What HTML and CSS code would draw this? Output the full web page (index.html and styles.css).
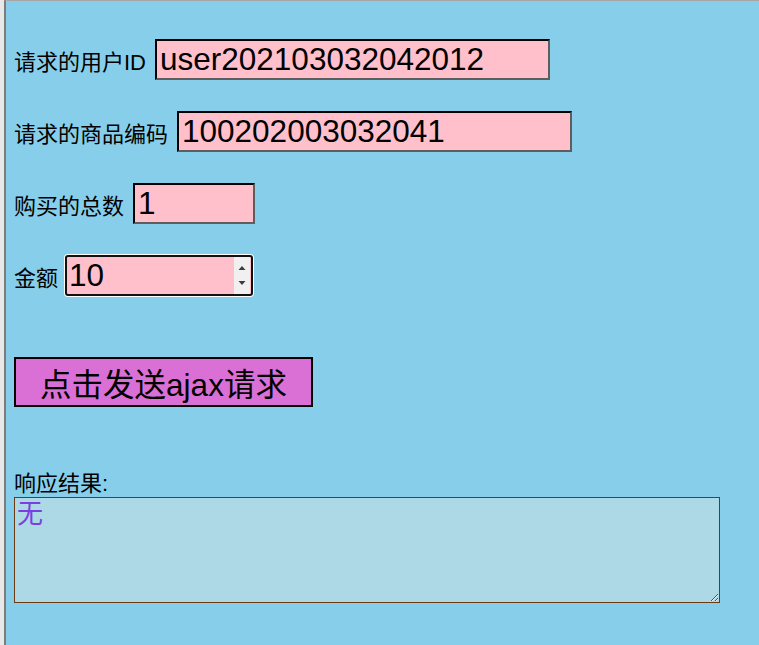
FILE: index.html
```html
<!DOCTYPE html>
<html lang="zh">
<head>
<meta charset="utf-8">
<title>ajax请求</title>
<link rel="stylesheet" href="styles.css">
</head>
<body>
<div class="frame">
  <main class="page">
    <div class="rows">
      <div class="row">
        <label class="lbl" for="uid">请求的用户ID</label>
        <input id="uid" class="field wide" type="text" value="user202103032042012">
      </div>
      <div class="row">
        <label class="lbl" for="gid">请求的商品编码</label>
        <input id="gid" class="field wide" type="text" value="100202003032041">
      </div>
      <div class="row">
        <label class="lbl" for="cnt">购买的总数</label>
        <input id="cnt" class="field short" type="text" value="1">
      </div>
      <div class="row row-tight">
        <label class="lbl" for="amt">金额</label>
        <div class="amount">
          <input id="amt" class="amount-input" type="text" value="10" autofocus>
          <span class="spin" aria-hidden="true">
            <svg width="16" height="37" viewBox="0 0 16 37">
              <path d="M4.5 13 L8 9 L11.5 13 Z" fill="#3c3c3c"/>
              <path d="M4.5 24 L8 28 L11.5 24 Z" fill="#3c3c3c"/>
            </svg>
          </span>
        </div>
      </div>
    </div>
    <button class="send" type="button">点击发送ajax请求</button>
    <div class="result-label">响应结果:</div>
    <textarea class="result">无</textarea>
  </main>
</div>
</body>
</html>
```
FILE: styles.css
```css
html {
  margin: 0;
  background: #e8e8e8;
}
body {
  margin: 0;
  height: 645px;
  overflow: hidden;
}
.frame {
  margin-left: 4px;
  height: 644px;
  border-top: 1px solid #a6a6a6;
  border-left: 2px solid #7c7c7c;
  background: #87ceeb;
  font-family: "Liberation Sans", "Noto Sans CJK SC", sans-serif;
  color: #000;
}
.page {
  padding: 38px 0 0 8px;
}
.rows {
  display: flex;
  flex-direction: column;
  gap: 31px;
}
.row {
  display: flex;
  align-items: baseline;
  gap: 9px;
}
.row-tight {
  gap: 7px;
}
.lbl {
  font-size: 22px;
  line-height: 26px;
}
.field {
  box-sizing: border-box;
  height: 41px;
  padding: 1px 3px;
  margin: 0;
  font-family: "Liberation Sans", "Noto Sans CJK SC", sans-serif;
  font-size: 31.5px;
  color: #000;
  background: #ffc0cb;
  border: 2px solid;
  border-color: #000 #5e5e5e #5e5e5e #000;
  outline: none;
}
.wide {
  width: 395px;
}
.short {
  width: 122px;
}
.amount {
  box-sizing: border-box;
  display: flex;
  width: 188px;
  height: 41px;
  border: 2px solid #111;
  border-radius: 3px;
  box-shadow: 0 0 0 1px #ffffff;
  background: #ffc0cb;
}
.amount-input {
  flex: 1;
  min-width: 0;
  margin: 0;
  padding: 0 2px;
  border: none;
  outline: none;
  background: transparent;
  font-family: "Liberation Sans", "Noto Sans CJK SC", sans-serif;
  font-size: 31.5px;
  color: #000;
  caret-color: #000;
}
.spin {
  display: flex;
  width: 16px;
  margin-right: 1px;
  background: #f0f0f0;
}
.spin svg {
  display: block;
}
.send {
  display: block;
  box-sizing: border-box;
  width: 299px;
  height: 50px;
  margin: 61px 0 0 0;
  padding: 0;
  border: 2px solid #000;
  background: #da70d6;
  color: #000;
  font-family: "Liberation Sans", "Noto Sans CJK SC", sans-serif;
  font-size: 31.5px;
}
.result-label {
  margin-top: 64px;
  font-size: 22px;
  line-height: 26px;
}
.result {
  display: block;
  box-sizing: border-box;
  width: 706px;
  height: 106px;
  margin: 0;
  padding: 1px 2px;
  border: 1px solid #6b3a12;
  background: #add8e6;
  color: #7a3fe0;
  font-family: "Liberation Sans", "Noto Sans CJK SC", sans-serif;
  font-size: 26px;
  line-height: 30px;
  outline: none;
}
```
